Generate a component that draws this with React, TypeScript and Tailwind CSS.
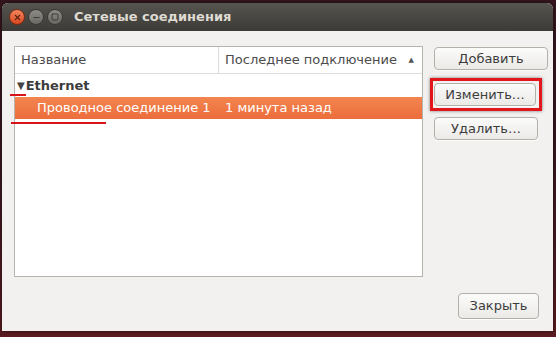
import { X, Minus, Square } from "lucide-react";

const font = { fontFamily: '"DejaVu Sans", "Noto Sans", sans-serif' };

const GtkButton = ({ label, className = "" }: { label: string; className?: string }) => (
    <button
        className={`h-[23px] shrink-0 rounded-[4px] border border-[#b3b0a9] bg-gradient-to-b from-[#fbfbfa] to-[#ebeae7] text-[13px] text-[#3c3c3c] shadow-[0_1px_0_rgba(255,255,255,0.8)] ${className}`}
    >
        {label}
    </button>
);

const App = () => {
    return (
        <div className="w-[556px] h-[337px] bg-gradient-to-b from-[#35161f] via-[#3a1820] to-[#5a1c22] pt-[3px] pl-[2px] overflow-hidden" style={font}>
            {/* Window */}
            <div className="relative w-[551px] h-[328px] flex flex-col rounded-t-[6px] overflow-hidden bg-[#f2f1f0] shadow-[0_0_4px_rgba(0,0,0,0.6)]">
                {/* Title bar */}
                <div className="h-[28px] flex items-center bg-gradient-to-b from-[#55544f] to-[#3c3b37] pl-[7px]">
                    <div className="flex items-center gap-[3px]">
                        <div className="w-[16px] h-[16px] rounded-full bg-gradient-to-b from-[#f3855d] to-[#d9471a] border border-[#7a2c14] flex items-center justify-center">
                            <X className="w-[9px] h-[9px] text-[#5a2010]" strokeWidth={3} />
                        </div>
                        <div className="w-[16px] h-[16px] rounded-full bg-gradient-to-b from-[#8e8c86] to-[#6b6964] border border-[#3a3936] flex items-center justify-center">
                            <Minus className="w-[9px] h-[9px] text-[#3d3c38]" strokeWidth={3} />
                        </div>
                        <div className="w-[16px] h-[16px] rounded-full bg-gradient-to-b from-[#8e8c86] to-[#6b6964] border border-[#3a3936] flex items-center justify-center">
                            <Square className="w-[8px] h-[8px] text-[#3d3c38]" strokeWidth={3} />
                        </div>
                    </div>
                    <span className="ml-[11px] text-[13px] font-bold text-[#dfdbd2]">Сетевые соединения</span>
                </div>

                {/* Content */}
                <div className="flex-1 flex flex-col pl-[12px] pr-[5px] pt-[15px] pb-[12px]">
                    <div className="flex gap-[11px]">
                        {/* Connections table */}
                        <div className="w-[409px] h-[231px] shrink-0 border border-[#b6b4ae] bg-white flex flex-col">
                            <div className="h-[27px] flex border-b border-[#dddcd9] text-[13px] text-[#4c4c4c]">
                                <div className="w-[204px] flex items-center pl-[6px] border-r border-[#dddcd9]">Название</div>
                                <div className="flex-1 flex items-center pl-[6px] pr-[8px]">
                                    <span className="flex-1">Последнее подключение</span>
                                    <span className="text-[7px] text-[#555]">▲</span>
                                </div>
                            </div>
                            <div className="h-[23px] flex items-center pl-[2px] text-[13px] font-bold text-[#3c3c3c]">
                                <span className="text-[10px] text-[#444] mr-[1px]">▼</span>
                                Ethernet
                            </div>
                            <div className="h-[22px] flex items-center bg-gradient-to-b from-[#f3854f] to-[#ec6d3c] text-[13px] text-white">
                                <span className="w-[210px] pl-[22px]">Проводное соединение 1</span>
                                <span>1 минута назад</span>
                            </div>
                        </div>

                        {/* Action buttons */}
                        <div className="flex flex-col pt-[1px]">
                            <GtkButton label="Добавить" className="w-[114px]" />
                            <div className="mt-[8px] w-[112px] h-[33px] -ml-[4px] border-[3px] border-[#e2171c] shadow-[0_0_3px_rgba(0,0,0,0.5)] flex items-center pl-[1px]">
                                <GtkButton label="Изменить…" className="w-[102px]" />
                            </div>
                            <GtkButton label="Удалить…" className="mt-[6px] w-[104px]" />
                        </div>
                    </div>

                    <div className="mt-auto flex justify-end pr-[9px]">
                        <GtkButton label="Закрыть" className="w-[81px] h-[26px]" />
                    </div>
                </div>

                {/* Annotation underlines */}
                <div className="absolute left-[8px] top-[91px] w-[16px] h-[2px] bg-[#d8141a]" />
                <div className="absolute left-[9px] top-[119px] w-[95px] h-[2px] bg-[#d8141a]" />
            </div>
        </div>
    );
};

export default App;
